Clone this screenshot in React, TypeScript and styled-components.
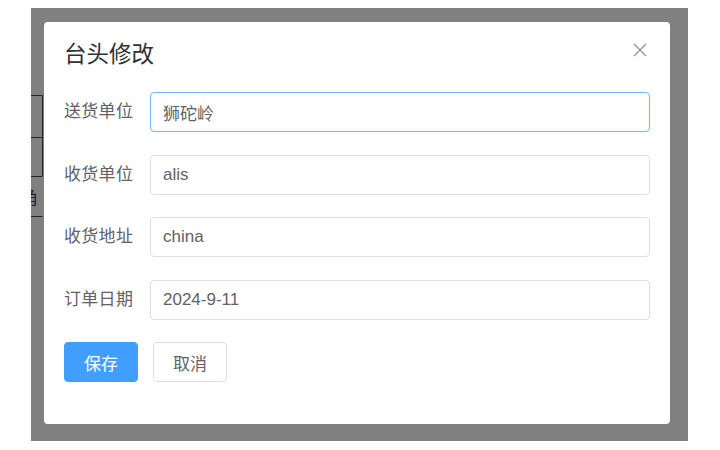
import styled, { createGlobalStyle } from "styled-components";

const GlobalStyle = createGlobalStyle`
	html, body {
		margin: 0;
		background: #fff;
		font-family: "Liberation Sans", "Noto Sans CJK SC", sans-serif;
	}
`;

const Page = styled.div`
	width: 720px;
	height: 450px;
	padding: 8px 32px 9px 31px;
	box-sizing: border-box;
`;

const Overlay = styled.div`
	position: relative;
	height: 100%;
	padding: 14px 18px 17px 13px;
	box-sizing: border-box;
	background: #808080;
	overflow: hidden;
`;

// the page table that sits under the mask, only its edge shows
const BackTable = styled.div`
	position: absolute;
	left: -60px;
	top: 87px;
	width: 72px;
	display: flex;
	flex-direction: column;
	color: #1e1e1e;
	font-size: 17px;
`;

const BackCell = styled.div<{ $line?: boolean; $h: number }>`
	height: ${(p) => p.$h}px;
	border-top: 1px solid #262626;
	border-right: ${(p) => (p.$line ? "1px solid #262626" : "1px solid transparent")};
	box-sizing: border-box;
	display: flex;
	align-items: center;
	justify-content: flex-end;
	padding-right: 4px;
`;

const Dialog = styled.div`
	position: relative;
	height: 100%;
	background: #fff;
	border-radius: 4px;
	box-sizing: border-box;
	display: flex;
	flex-direction: column;
`;

const Header = styled.div`
	display: flex;
	justify-content: space-between;
	align-items: flex-start;
	padding: 21px 23px 10px 20px;
`;

const Title = styled.span`
	font-size: 22.5px;
	line-height: 24px;
	color: #303133;
`;

const Close = styled.button`
	border: none;
	background: none;
	padding: 0;
	width: 14px;
	height: 14px;
	color: #909399;
	cursor: pointer;
	display: flex;
`;

const Body = styled.div`
	padding: 15px 20px 0 20px;
	display: flex;
	flex-direction: column;
	gap: 22.5px;
`;

const Row = styled.div`
	display: flex;
	align-items: center;
`;

const Label = styled.label`
	width: 86px;
	flex: none;
	font-size: 17px;
	line-height: 40px;
	color: #606266;
	letter-spacing: 0.3px;
`;

const Input = styled.input<{ $focus?: boolean }>`
	flex: 1;
	height: 40px;
	box-sizing: border-box;
	padding: 0 12px;
	border: 1px solid ${(p) => (p.$focus ? "#6fb3ff" : "#dcdfe6")};
	border-radius: 4px;
	font-family: "Liberation Sans", "Noto Sans CJK SC", sans-serif;
	font-size: 17px;
	color: #606266;
	outline: none;
	background: #fff;
`;

const Actions = styled.div`
	display: flex;
	gap: 15px;
`;

const Button = styled.button<{ $primary?: boolean }>`
	height: 40px;
	padding: 0 19px;
	border-radius: 4px;
	font-family: "Liberation Sans", "Noto Sans CJK SC", sans-serif;
	font-size: 17px;
	border: 1px solid ${(p) => (p.$primary ? "#409eff" : "#dcdfe6")};
	background: ${(p) => (p.$primary ? "#409eff" : "#fff")};
	color: ${(p) => (p.$primary ? "#fff" : "#606266")};
	cursor: pointer;
`;

const fields = [
	{ label: "送货单位", value: "狮砣岭", focus: true },
	{ label: "收货单位", value: "alis" },
	{ label: "收货地址", value: "china" },
	{ label: "订单日期", value: "2024-9-11" },
];

export default function App() {
	return (
		<>
			<GlobalStyle />
			<Page>
				<Overlay>
					<BackTable>
						<BackCell $line $h={42} />
						<BackCell $line $h={39} />
						<BackCell $h={40}>角</BackCell>
						<BackCell $h={40} />
					</BackTable>
					<Dialog>
						<Header>
							<Title>台头修改</Title>
							<Close aria-label="close">
								<svg width="14" height="14" viewBox="0 0 14 14">
									<path d="M1 1L13 13M13 1L1 13" stroke="currentColor" strokeWidth="1.3" />
								</svg>
							</Close>
						</Header>
						<Body>
							{fields.map((f) => (
								<Row key={f.label}>
									<Label>{f.label}</Label>
									<Input $focus={f.focus} value={f.value} readOnly />
								</Row>
							))}
							<Actions>
								<Button $primary>保存</Button>
								<Button>取消</Button>
							</Actions>
						</Body>
					</Dialog>
				</Overlay>
			</Page>
		</>
	);
}
